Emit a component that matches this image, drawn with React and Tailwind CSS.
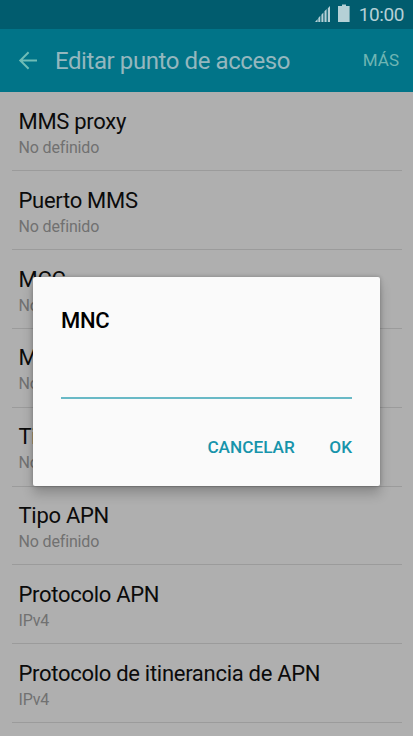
import React from 'react';

const settings = [
  { title: 'MMS proxy', value: 'No definido' },
  { title: 'Puerto MMS', value: 'No definido' },
  { title: 'MCC', value: 'No definido' },
  { title: 'MNC', value: 'No definido' },
  { title: 'Tipo de autenticación', value: 'No definido' },
  { title: 'Tipo APN', value: 'No definido' },
  { title: 'Protocolo APN', value: 'IPv4' },
  { title: 'Protocolo de itinerancia de APN', value: 'IPv4' },
];

const SignalIcon = () => (
  <svg width="16" height="16" viewBox="0 0 16 16" fill="currentColor">
    <path d="M0 16L2.6 13V16zM3.3 12L5.3 9.8V16H3.3zM6.4 8.8L8.4 6.6V16H6.4zM9.5 5.2L11.6 3V16H9.5zM12.8 2.2L15 0V16H12.8z" />
  </svg>
);

const BatteryIcon = () => (
  <svg width="12" height="18" viewBox="0 0 12 18" fill="currentColor">
    <path d="M4 0.5H8V2H11.6V18H0V2H4z" />
  </svg>
);

const BackIcon = () => (
  <svg width="20" height="20" viewBox="0 0 20 20" fill="none" stroke="currentColor" strokeWidth="2">
    <path d="M19 9.5H2.4M10.6 1.2L2.3 9.5L10.6 17.8" />
  </svg>
);

const StatusBar = () => (
  <div className="flex h-[29px] shrink-0 items-start justify-end bg-[#015c6e] pr-[9px] text-[#b5d0d6]">
    <div className="mr-[7px] mt-[6px]">
      <SignalIcon />
    </div>
    <div className="mr-[9px] mt-1">
      <BatteryIcon />
    </div>
    <span className="mt-[4px] text-[19px] leading-[22px] tracking-[-0.4px]">10:00</span>
  </div>
);

const Header = () => (
  <header className="flex h-[63px] shrink-0 items-center bg-[#017488] pl-[18px] pr-[14px]">
    <button className="text-[#6fbcb6]">
      <BackIcon />
    </button>
    <h1 className="ml-[17px] flex-1 text-[24px] leading-7 tracking-[-0.42px] text-[#94b7be]">Editar punto de acceso</h1>
    <button className="pb-[2px] text-[17px] leading-5 text-[#6fb5b3]">MÁS</button>
  </header>
);

const SettingRow = ({ title, value }) => (
  <li className="h-[78.8px] shrink-0 border-b border-[#9b9b9b] pl-[6.5px] pt-[16.5px]">
    <div className="text-[22px] leading-[26px] tracking-[-0.29px] text-[#0b0b0b]">{title}</div>
    <div className="text-[16px] leading-[25px] tracking-[-0.15px] text-[#717171]">{value}</div>
  </li>
);

const EditDialog = () => (
  <div className="absolute left-[33px] top-[277px] flex h-[209px] w-[347px] flex-col rounded-[2px] bg-[#fafafa] px-7 shadow-[0_8px_12px_rgba(0,0,0,0.2),0_0_4px_rgba(0,0,0,0.25)]">
    <h2 className="mt-[31px] text-[22px] font-medium leading-[26px] tracking-[-0.3px] text-black">MNC</h2>
    <input className="mt-[22px] h-[43px] w-full shrink-0 border-b-2 border-[#69b9c6] outline-none" />
    <div className="mt-[37px] flex justify-end gap-[34.5px] text-[17.2px] font-medium leading-[22px] text-[#1794ab]">
      <button>CANCELAR</button>
      <button>OK</button>
    </div>
  </div>
);

export default function App() {
  return (
    <div className="relative flex h-[736px] w-[413px] flex-col overflow-hidden bg-[#afafaf] font-['Roboto',sans-serif]">
      <StatusBar />
      <Header />
      <ul className="ml-3 mr-[11px] flex flex-col pt-[0.6px]">
        {settings.map((item) => (
          <SettingRow key={item.title} title={item.title} value={item.value} />
        ))}
      </ul>
      <EditDialog />
    </div>
  );
}
